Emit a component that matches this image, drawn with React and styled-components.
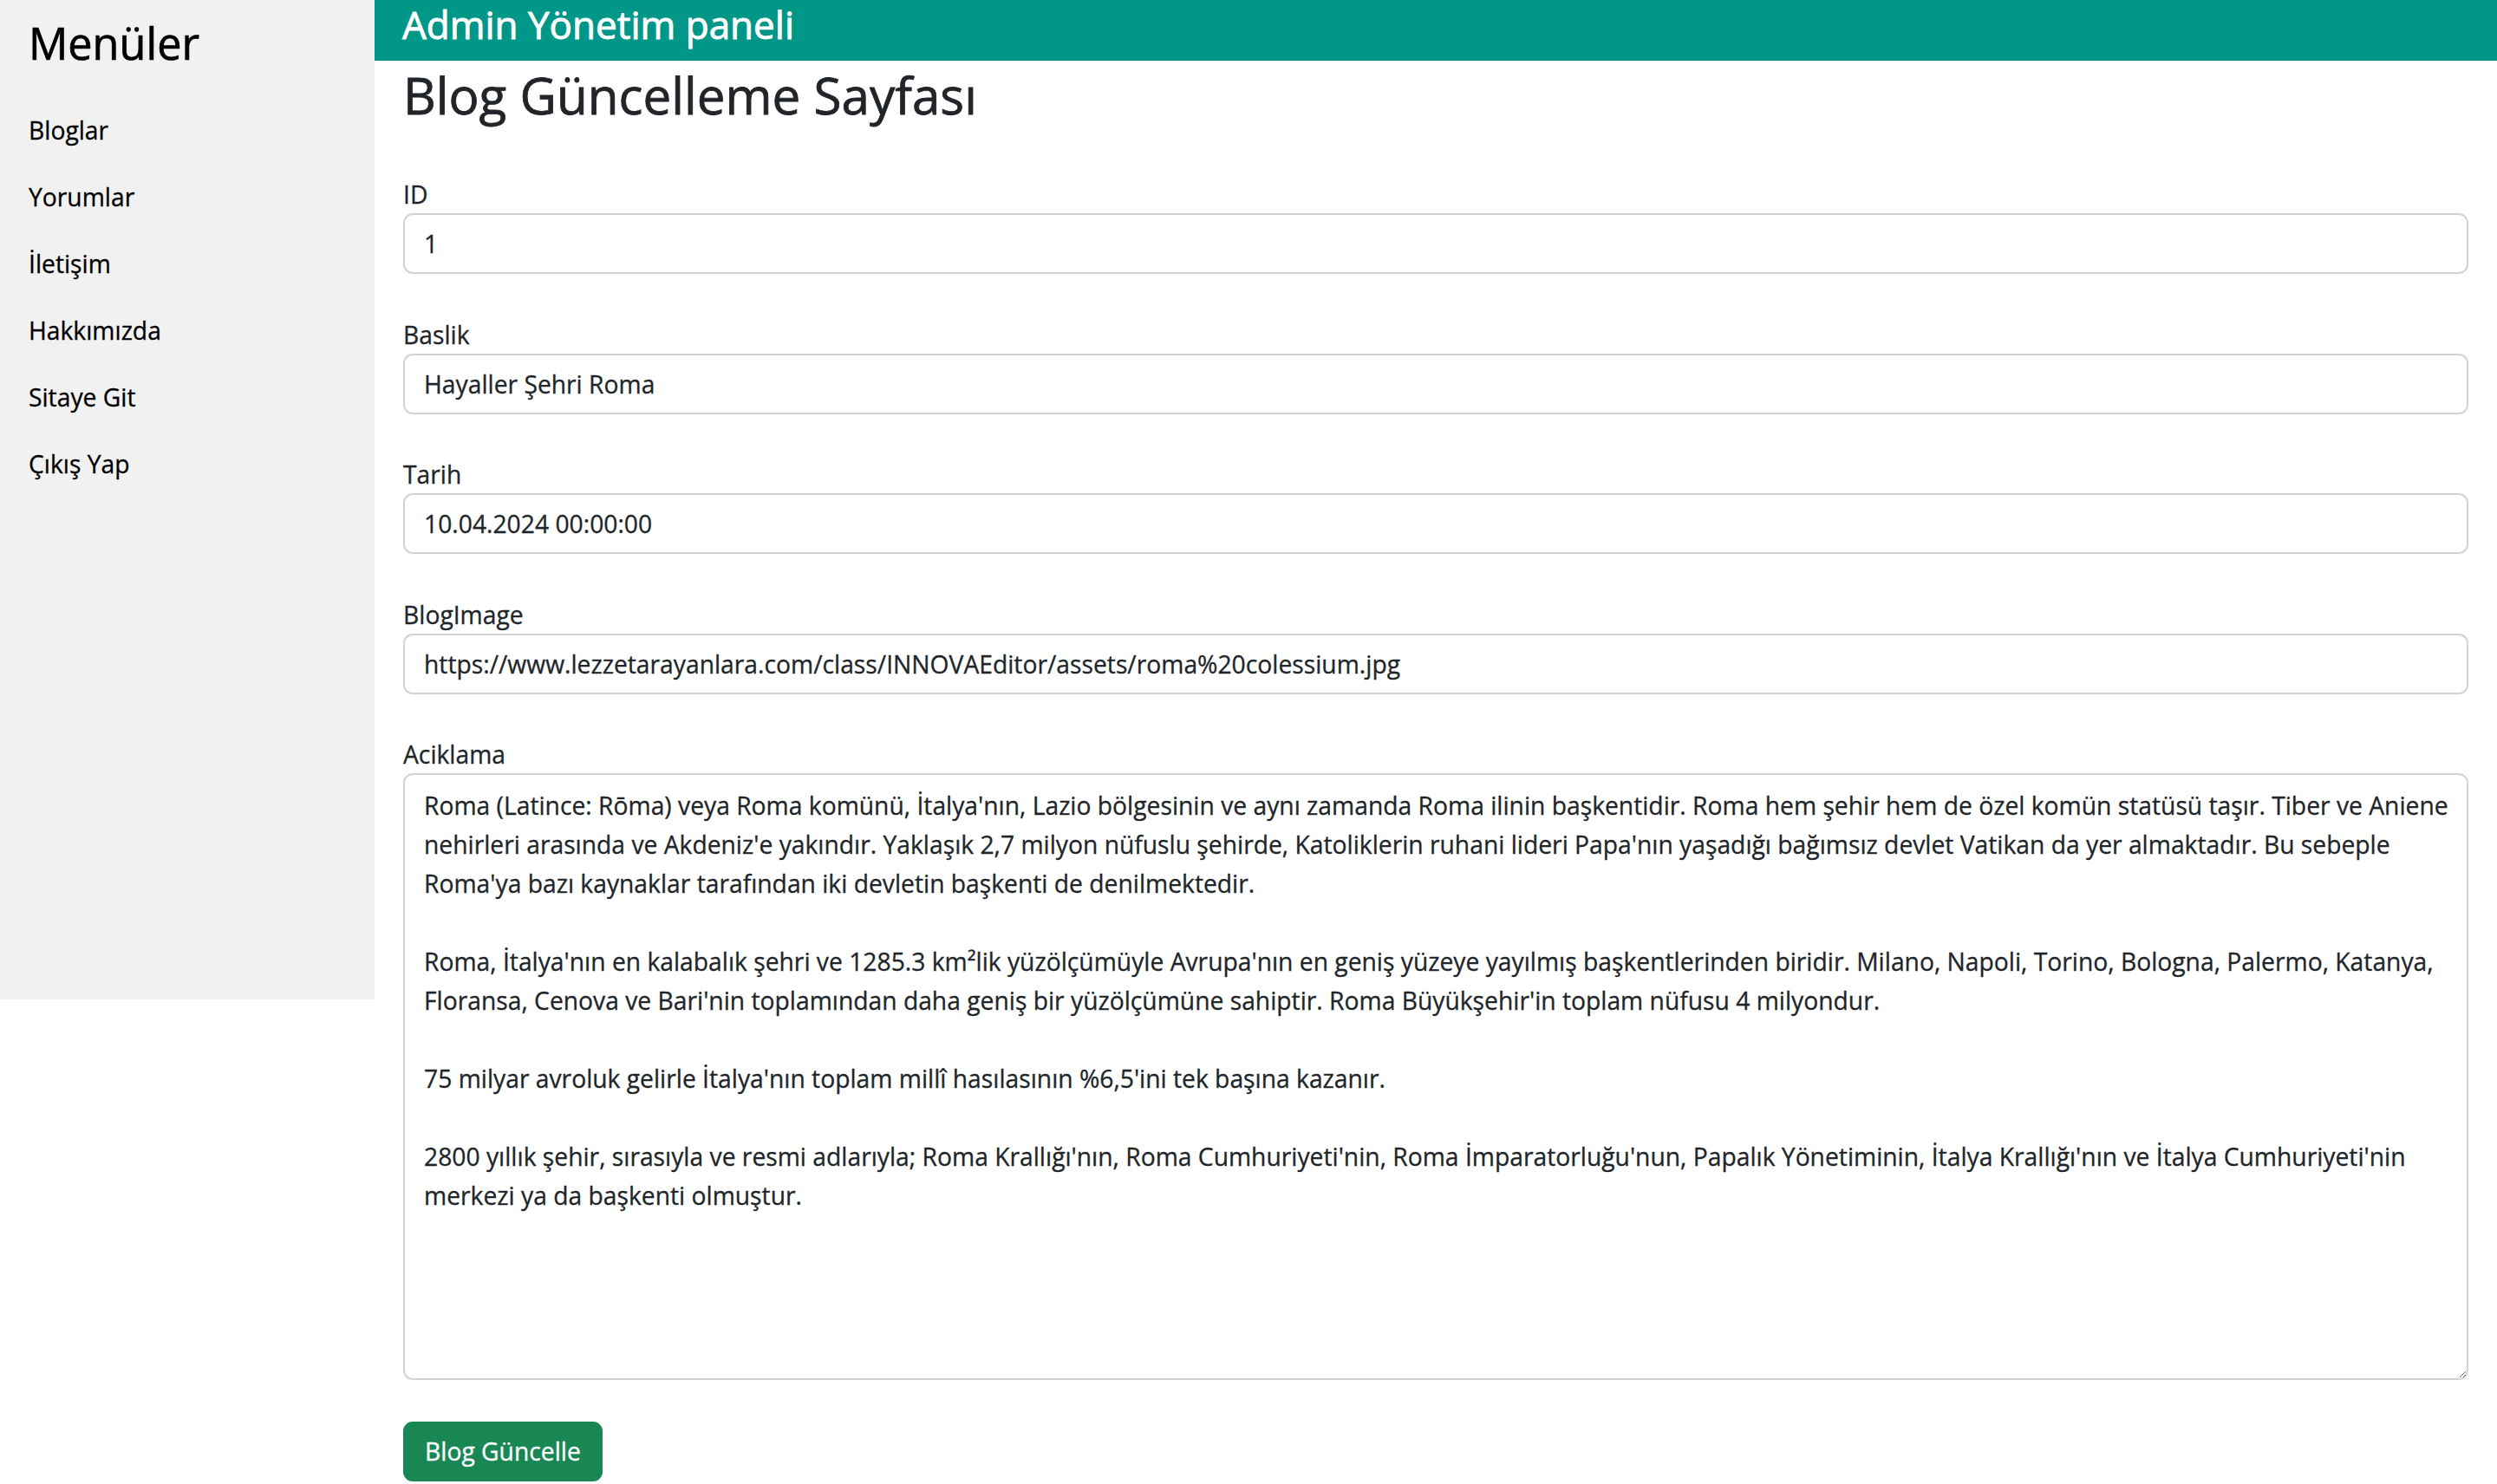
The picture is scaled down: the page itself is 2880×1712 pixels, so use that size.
import React from "react";
import styled, { createGlobalStyle } from "styled-components";

const FONT = `"Open Sans", "Noto Sans", "Liberation Sans", sans-serif`;

const GlobalStyle = createGlobalStyle`
  * { box-sizing: border-box; }
  html, body { margin: 0; padding: 0; background: #fff; }
  body {
    font-family: ${FONT};
    font-size: 28.25px;
    line-height: 1.5;
    color: #212529;
    -webkit-text-stroke: 0.3px currentColor;
  }
`;

const menu = ["Bloglar", "Yorumlar", "İletişim", "Hakkımızda", "Sitaye Git", "Çıkış Yap"];

const text = [
  "Roma (Latince: Rōma) veya Roma komünü, İtalya'nın, Lazio bölgesinin ve aynı zamanda Roma ilinin başkentidir. Roma hem şehir hem de özel komün statüsü taşır. Tiber ve Aniene",
  "nehirleri arasında ve Akdeniz'e yakındır. Yaklaşık 2,7 milyon nüfuslu şehirde, Katoliklerin ruhani lideri Papa'nın yaşadığı bağımsız devlet Vatikan da yer almaktadır. Bu sebeple",
  "Roma'ya bazı kaynaklar tarafından iki devletin başkenti de denilmektedir.",
  "",
  "Roma, İtalya'nın en kalabalık şehri ve 1285.3 km²lik yüzölçümüyle Avrupa'nın en geniş yüzeye yayılmış başkentlerinden biridir. Milano, Napoli, Torino, Bologna, Palermo, Katanya,",
  "Floransa, Cenova ve Bari'nin toplamından daha geniş bir yüzölçümüne sahiptir. Roma Büyükşehir'in toplam nüfusu 4 milyondur.",
  "",
  "75 milyar avroluk gelirle İtalya'nın toplam millî hasılasının %6,5'ini tek başına kazanır.",
  "",
  "2800 yıllık şehir, sırasıyla ve resmi adlarıyla; Roma Krallığı'nın, Roma Cumhuriyeti'nin, Roma İmparatorluğu'nun, Papalık Yönetiminin, İtalya Krallığı'nın ve İtalya Cumhuriyeti'nin",
  "merkezi ya da başkenti olmuştur.",
].join("\n");

const url = "https://www.lezzetarayanlara.com/class/INNOVAEditor/assets/roma%20colessium.jpg";

const Page = styled.div`
  display: flex;
  align-items: flex-start;
  min-height: 1712px;
`;

const Sidebar = styled.nav`
  flex: none;
  width: 432px;
  height: 1153px;
  padding-top: 19px;
  background: #f1f1f1;
  display: flex;
  flex-direction: column;
`;

const SideTitle = styled.h3`
  margin: 0 0 31px;
  padding: 0 33px;
  font-size: 50.4px;
  line-height: 61.7px;
  font-weight: 500;
  color: #000;
  -webkit-text-stroke: 0.7px currentColor;
`;

const SideLink = styled.a`
  display: block;
  padding: 16.5px 33px;
  line-height: 44px;
  color: #000;
  text-decoration: none;
`;

const Main = styled.main`
  flex: 1;
  min-width: 0;
`;

const TopBar = styled.header`
  height: 70px;
  padding: 1.5px 32px 0;
  background: #009688;
  color: #fff;
`;

const TopTitle = styled.h4`
  margin: 0;
  font-size: 44px;
  line-height: 53px;
  font-weight: 500;
  -webkit-text-stroke: 0.9px currentColor;
`;

const Content = styled.div`
  padding: 0 33px 40px;
`;

const PageTitle = styled.h2`
  margin: 5px 0 56.5px;
  font-size: 58.4px;
  line-height: 70.5px;
  font-weight: 500;
  -webkit-text-stroke: 0.8px currentColor;
`;

const Form = styled.form`
  display: flex;
  flex-direction: column;
  gap: 47.5px;
`;

const Field = styled.div`
  display: flex;
  flex-direction: column;
`;

const Label = styled.label`
  line-height: 44px;
`;

const Input = styled.input`
  height: 70px;
  padding: 0 22px;
  border: 2px solid #ced4da;
  border-radius: 11px;
  background: #fff;
  color: #212529;
  font: inherit;
  outline: none;
`;

const TextArea = styled.textarea`
  height: 700px;
  padding: 12.5px 22px;
  border: 2px solid #ced4da;
  border-radius: 11px;
  background: #fff;
  color: #212529;
  font: inherit;
  line-height: 45px;
  white-space: pre;
  overflow: hidden;
  resize: vertical;
  outline: none;
`;

const Button = styled.button`
  align-self: flex-start;
  height: 69px;
  padding: 0 25px;
  border: none;
  border-radius: 11px;
  background: #198754;
  color: #fff;
  font: inherit;
`;

export default function App() {
  return (
    <>
      <GlobalStyle />
      <Page>
        <Sidebar>
          <SideTitle>Menüler</SideTitle>
          {menu.map((item) => (
            <SideLink key={item} href="#">
              {item}
            </SideLink>
          ))}
        </Sidebar>
        <Main>
          <TopBar>
            <TopTitle>Admin Yönetim paneli</TopTitle>
          </TopBar>
          <Content>
            <PageTitle>Blog Güncelleme Sayfası</PageTitle>
            <Form onSubmit={(e) => e.preventDefault()}>
              <Field>
                <Label>ID</Label>
                <Input defaultValue="1" />
              </Field>
              <Field>
                <Label>Baslik</Label>
                <Input defaultValue="Hayaller Şehri Roma" />
              </Field>
              <Field>
                <Label>Tarih</Label>
                <Input defaultValue="10.04.2024 00:00:00" />
              </Field>
              <Field>
                <Label>BlogImage</Label>
                <Input defaultValue={url} />
              </Field>
              <Field>
                <Label>Aciklama</Label>
                <TextArea wrap="off" defaultValue={text} />
              </Field>
              <Button type="submit">Blog Güncelle</Button>
            </Form>
          </Content>
        </Main>
      </Page>
    </>
  );
}
